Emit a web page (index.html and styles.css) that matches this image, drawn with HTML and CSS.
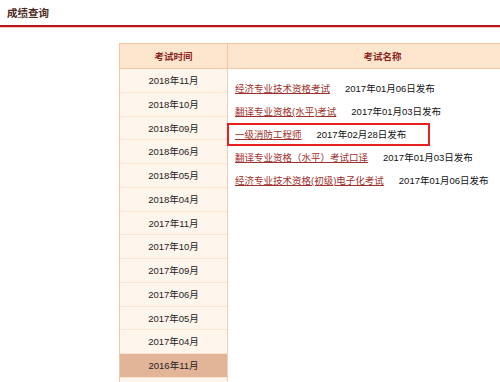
FILE: index.html
```html
<!DOCTYPE html>
<html lang="zh-CN">
<head>
    <meta charset="UTF-8">
    <meta name="viewport" content="width=device-width, initial-scale=1.0">
    <title>成绩查询</title>
    <link rel="stylesheet" href="styles.css">
</head>
<body>
    <header class="page-head">
        <h1>成绩查询</h1>
    </header>
    <div class="board">
        <div class="score-table">
            <div class="th">考试时间</div>
            <div class="th th-name">考试名称</div>
            <div class="months">
                <div class="month">2018年11月</div>
                <div class="month">2018年10月</div>
                <div class="month">2018年09月</div>
                <div class="month">2018年06月</div>
                <div class="month">2018年05月</div>
                <div class="month">2018年04月</div>
                <div class="month">2017年11月</div>
                <div class="month">2017年10月</div>
                <div class="month">2017年09月</div>
                <div class="month">2017年06月</div>
                <div class="month">2017年05月</div>
                <div class="month">2017年04月</div>
                <div class="month active">2016年11月</div>
                <div class="month"></div>
            </div>
            <div class="exams">
                <div class="exam"><a href="#">经济专业技术资格考试</a><span class="date">2017年01月06日发布</span></div>
                <div class="exam"><a href="#">翻译专业资格(水平)考试</a><span class="date">2017年01月03日发布</span></div>
                <div class="exam marked"><a href="#">一级消防工程师</a><span class="date">2017年02月28日发布</span></div>
                <div class="exam"><a href="#">翻译专业资格（水平）考试口译</a><span class="date">2017年01月03日发布</span></div>
                <div class="exam"><a href="#">经济专业技术资格(初级)电子化考试</a><span class="date">2017年01月06日发布</span></div>
            </div>
        </div>
    </div>
</body>
</html>
```

FILE: styles.css
```css
html, body {
    margin: 0;
    height: 382px;
    overflow: hidden;
}
body {
    font-family: "Liberation Sans", "Noto Sans CJK SC", sans-serif;
    font-size: 9.5px;
    color: #111;
    background: #fff;
}
.page-head {
    height: 25px;
    border-bottom: 2px solid #b3181b;
    box-shadow: 0 1px 0 #f3c9c9;
}
.page-head h1 {
    margin: 0;
    padding: 7px 0 0 7px;
    font-size: 10.5px;
    line-height: 12px;
    font-weight: bold;
    color: #4f2b1f;
}
.board {
    box-sizing: border-box;
    width: 500px;
    height: 355px;
    overflow: hidden;
    padding: 16px 0 0 119px;
}
.score-table {
    display: grid;
    grid-template-columns: 108px 310px;
    width: 418px;
    border-left: 1px solid #f5c6a0;
    border-top: 1px solid #f5c6a0;
}
.th {
    height: 24px;
    line-height: 25px;
    text-align: center;
    font-weight: bold;
    color: #8e1f1f;
    background: #fde6cd;
    border-bottom: 1px solid #f5c6a0;
    border-right: 1px solid #f5c6a0;
}
.months {
    border-right: 1px solid #f2cdb0;
}
.month {
    height: 22.75px;
    line-height: 23.5px;
    text-align: center;
    color: #222;
    background: #fef5ec;
    border-bottom: 1px solid #fae5d3;
}
.month.active {
    background: #e3b598;
}
.exams {
    padding: 8px 0 0 7px;
}
.exam {
    height: 23px;
    line-height: 23px;
    white-space: nowrap;
}
.exam a {
    color: #a0302b;
    text-decoration: underline;
    padding-right: 2px;
}
.date {
    margin-left: 13px;
}
.exam.marked {
    width: 193px;
    height: 19px;
    line-height: 19px;
    margin-left: -8px;
    padding-left: 6px;
    border: 2px solid #e8211f;
}
```
